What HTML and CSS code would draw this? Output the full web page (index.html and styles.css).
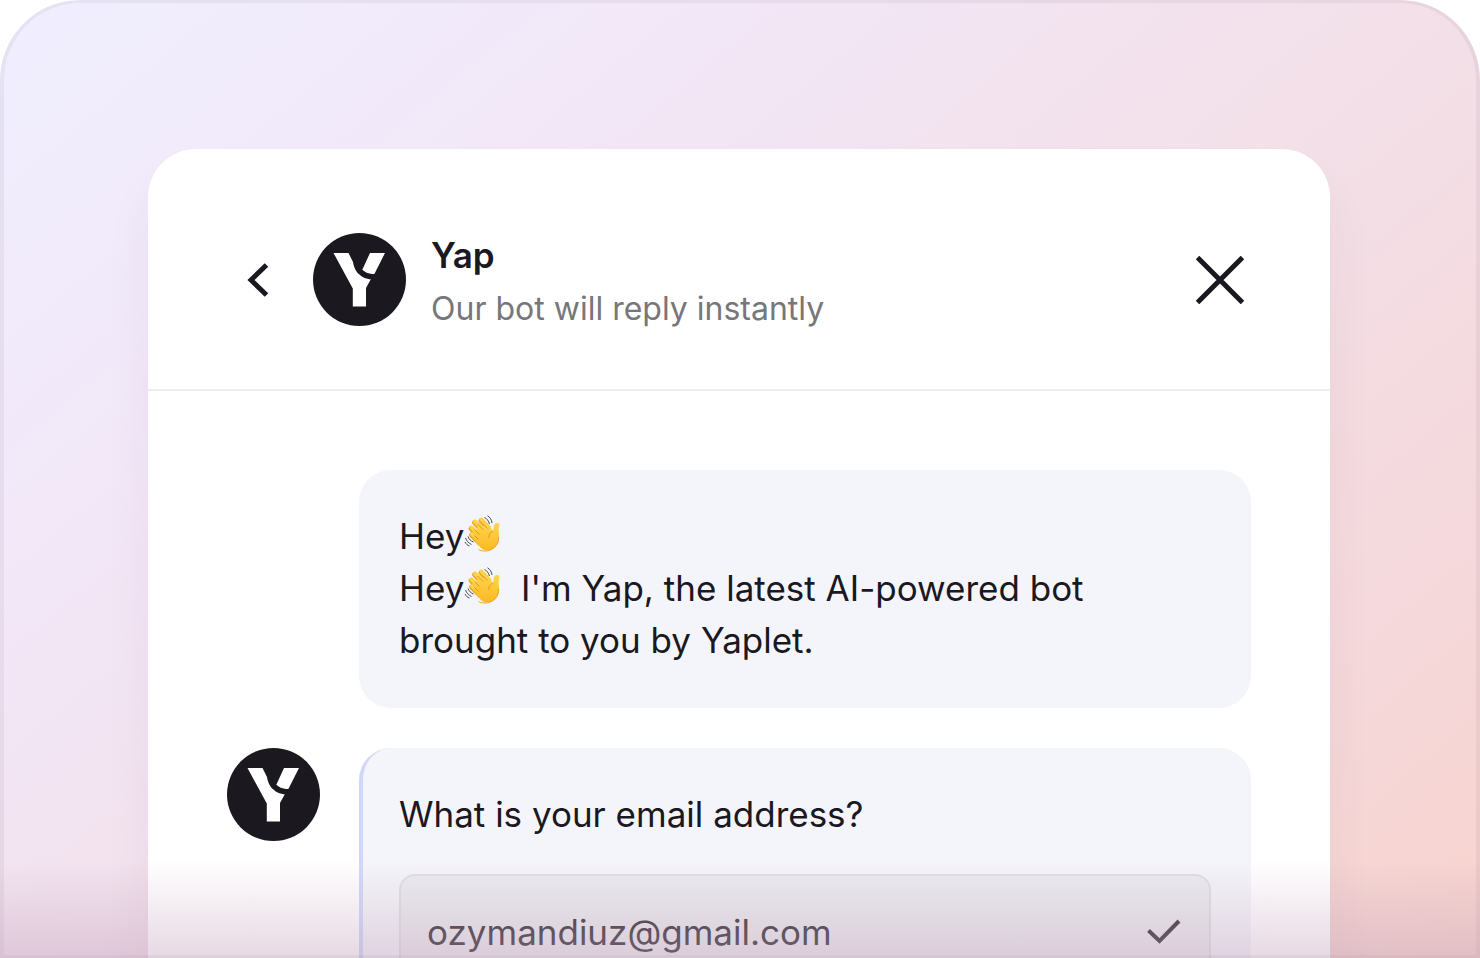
FILE: index.html
```html
<!DOCTYPE html>
<html lang="en">
<head>
<meta charset="utf-8">
<meta name="viewport" content="width=device-width, initial-scale=1">
<title>Yap chat</title>
<link rel="stylesheet" href="styles.css">
</head>
<body>
<svg class="defs" aria-hidden="true">
  <defs>
    <linearGradient id="skin" x1="0" y1="0" x2="0" y2="1">
      <stop offset="0" stop-color="#ffd54a"/>
      <stop offset="1" stop-color="#fbb823"/>
    </linearGradient>
    <symbol id="yap-logo" viewBox="0 0 93 93">
      <circle cx="46.500" cy="46.500" r="46.500" fill="#1b181f"/>
      <path fill="#fff" d="M20.500 20H35.500L40 29C41 37 46 41.500 46.500 41.500C49 44.500 54 46 57.800 46.300L53 55V73.500H39.800V55.500ZM57 20H72L61.500 40.700C57 41.500 52 39.500 49.300 36.800Z"/>
    </symbol>
    <symbol id="wave" viewBox="0 0 36 38">
      <path d="M7 20L15 28M6.500 13.500L15 22M10 7.500L19 17M16.500 5.500L24 13.500" stroke="#eda51f" stroke-width="5" stroke-linecap="round"/>
      <path d="M7.500 19L16 27M7 12.500L16 21M10.500 6.500L20 16M17 4.500L25 13" stroke="#ffd04a" stroke-width="4" stroke-linecap="round"/>
      <path fill="url(#skin)" d="M9 23L13 12L23 10L28.500 16C29.500 13 28.800 8.500 32 8C35 7.500 35.500 9.500 34.500 12C33.500 15 34.500 18 34.500 22C34.500 30 29 35.500 22.500 35.500C17.500 35.500 14.500 31.500 9 23Z"/>
      <path d="M14 34.500C20 38 34 36 34.300 22" fill="none" stroke="#eba42c" stroke-width="1"/>
      <path d="M10 14.500L15 19.500M13 9L19 15M19 9.500L23 13.500M10 20.500L14 24.500M28.500 16C25 18 24 20 24.500 23" fill="none" stroke="#e59a20" stroke-width="1"/>
      <path d="M20 2.500C22.500 3.500 24 6 25 9M23 .8C26 2.500 27 5 27.500 8M1 23C2 26 4 28 7 29.500M3.500 21.500C4.500 24 6 26 9 27M.5 27C1.500 29 3 30.500 5 31" fill="none" stroke="#4b4b52" stroke-width="1"/>
    </symbol>
  </defs>
</svg>
<main class="scene">
  <section class="chat">
    <header class="chat-header">
      <button class="icon-button back" type="button" aria-label="Back">
        <svg width="22" height="36" viewBox="0 0 22 36"><path d="M20.500 3L5 18L20.500 33" fill="none" stroke="#1b181f" stroke-width="5"/></svg>
      </button>
      <svg class="avatar" role="img" aria-label="Yap logo"><use href="#yap-logo"/></svg>
      <div class="identity">
        <h1 class="name">Yap</h1>
        <p class="status">Our bot will reply instantly</p>
      </div>
      <button class="icon-button" type="button" aria-label="Close">
        <svg width="48" height="48" viewBox="0 0 48 48"><path d="M1.500 1.500L46.500 46.500M46.500 1.500L1.500 46.500" fill="none" stroke="#1b181f" stroke-width="5"/></svg>
      </button>
    </header>
    <div class="messages">
      <div class="bubble">
        <p>Hey<svg class="emoji" role="img" aria-label="Waving hand"><use href="#wave"/></svg></p>
        <p>Hey<svg class="emoji" role="img" aria-label="Waving hand"><use href="#wave"/></svg>&nbsp; I'm Yap, the latest AI-powered bot<br>brought to you by Yaplet.</p>
      </div>
      <svg class="avatar" role="img" aria-label="Yap logo"><use href="#yap-logo"/></svg>
      <form class="bubble question">
        <label for="email">What is your email address?</label>
        <div class="field">
          <input id="email" type="email" value="ozymandiuz@gmail.com">
          <button class="icon-button" type="button" aria-label="Submit email">
            <svg width="34" height="26" viewBox="0 0 34 26"><path d="M1.500 11.500L12.500 22L32 2" fill="none" stroke="#39333b" stroke-width="4"/></svg>
          </button>
        </div>
      </form>
    </div>
  </section>
</main>
</body>
</html>
```
FILE: styles.css
```css
* {
  box-sizing: border-box;
}

body {
  margin: 0;
  background: #fff;
  color: #1b181f;
  font-family: Inter, "Liberation Sans", sans-serif;
}

h1,
p {
  margin: 0;
}

.defs {
  position: absolute;
  width: 0;
  height: 0;
}

.scene {
  position: relative;
  display: flex;
  height: 100vh;
  padding: 149px 150px 0 148px;
  overflow: hidden;
  border-radius: 80px 80px 0 0;
  background: linear-gradient(140deg, #f0efff 0%, #f2e7f7 28%, #f3dfe7 58%, #f5d8da 83%, #f8d3cd 100%);
}

.scene::before {
  content: "";
  position: absolute;
  inset: 0;
  border: solid rgba(60, 30, 60, 0.06);
  border-width: 3px 4px;
  border-radius: inherit;
}

.scene::after {
  content: "";
  position: absolute;
  inset: auto 0 0;
  height: 98px;
  background: linear-gradient(rgba(192, 160, 185, 0), rgba(192, 160, 185, 0.4));
  pointer-events: none;
}

.chat {
  flex: 1;
  min-width: 0;
  border-radius: 48px 48px 0 0;
  background: #fff;
  box-shadow: 0 32px 48px rgba(90, 50, 80, 0.06);
}

.chat-header {
  display: flex;
  align-items: center;
  padding: 84px 86px 63px 98px;
  border-bottom: 2px solid #eeeef0;
}

.icon-button {
  display: flex;
  padding: 0;
  border: 0;
  background: none;
}

.back {
  margin-right: 45px;
}

.avatar {
  flex: none;
  width: 93px;
  height: 93px;
}

.identity {
  flex: 1;
  margin-left: 25px;
}

.name {
  font-size: 35px;
  font-weight: 600;
  line-height: 45px;
}

.status {
  margin-top: 14px;
  color: #77767b;
  font-size: 32px;
  line-height: 34px;
}

.messages {
  display: grid;
  grid-template-columns: 93px 1fr;
  gap: 40px 39px;
  padding: 79px 79px 0;
}

.bubble {
  grid-column: 2;
  padding: 40px;
  border-radius: 32px;
  background: #f4f5fa;
  font-size: 35px;
  line-height: 52px;
}

.bubble:first-child {
  padding-bottom: 42px;
}

.question {
  border-left: 4px solid #d2d7fa;
  padding-left: 36px;
}

.emoji {
  width: 37px;
  height: 38px;
  vertical-align: -4px;
}

.field {
  display: flex;
  align-items: center;
  height: 116px;
  margin-top: 34px;
  padding: 0 28px 0 26px;
  border: 2px solid #dfdfe3;
  border-radius: 16px;
  background: #ebebef;
}

.field input {
  flex: 1;
  min-width: 0;
  padding: 0;
  border: 0;
  outline: 0;
  background: none;
  color: #39333b;
  font: inherit;
}
```
